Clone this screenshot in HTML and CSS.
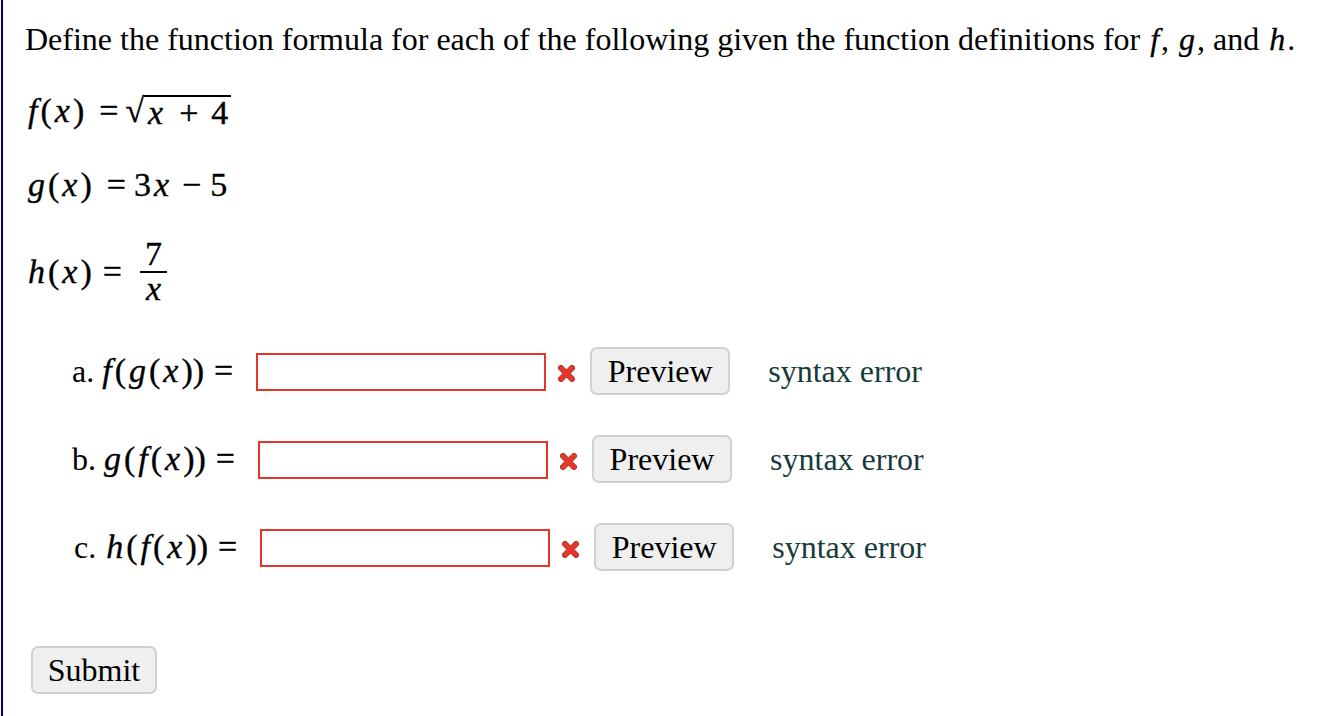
FILE: index.html
```html
<!DOCTYPE html>
<html>
<head>
<meta charset="utf-8">
<link rel="stylesheet" href="styles.css">
</head>
<body>
<div class="page">
  <p class="intro">Define the function formula for each of the following given the function definitions for <i class="v">f</i>, <i class="v">g</i>, and <i class="v">h</i>.</p>

  <div class="def def-f"><span class="m"><i>f</i>(<i>x</i>)</span><span class="m eq">=</span><span class="m sqrt"><span class="rad">√</span><span class="radicand"><i>x</i><span class="bin">+</span>4</span></span></div>

  <div class="def def-g"><span class="m"><i>g</i>(<i>x</i>)</span><span class="m eq">=</span><span class="m">3<i>x</i></span><span class="m op">−</span><span class="m">5</span></div>

  <div class="def def-h"><span class="m"><i>h</i>(<i>x</i>)</span><span class="m eq">=</span><span class="m frac"><span class="num">7</span><span class="den"><i>x</i></span></span></div>

  <div class="parts">
    <div class="row">
      <span class="lbl">a.</span><span class="m"><i>f</i>(<i>g</i>(<i>x</i>))</span><span class="m eq">=</span>
      <input class="ans" type="text">
      <svg class="xmark" width="17" height="17" viewBox="0 0 17 17"><path d="M3 3 L14 14 M14 3 L3 14" stroke="#8a3a33" stroke-width="6" stroke-linecap="round"/><path d="M3 3 L14 14 M14 3 L3 14" stroke="#e8352b" stroke-width="4.6" stroke-linecap="round"/></svg>
      <button class="btn">Preview</button>
      <span class="msg">syntax error</span>
    </div>
    <div class="row">
      <span class="lbl">b.</span><span class="m"><i>g</i>(<i>f</i>(<i>x</i>))</span><span class="m eq">=</span>
      <input class="ans" type="text">
      <svg class="xmark" width="17" height="17" viewBox="0 0 17 17"><path d="M3 3 L14 14 M14 3 L3 14" stroke="#8a3a33" stroke-width="6" stroke-linecap="round"/><path d="M3 3 L14 14 M14 3 L3 14" stroke="#e8352b" stroke-width="4.6" stroke-linecap="round"/></svg>
      <button class="btn">Preview</button>
      <span class="msg">syntax error</span>
    </div>
    <div class="row row-c">
      <span class="lbl">c.</span><span class="m"><i>h</i>(<i>f</i>(<i>x</i>))</span><span class="m eq">=</span>
      <input class="ans" type="text">
      <svg class="xmark" width="17" height="17" viewBox="0 0 17 17"><path d="M3 3 L14 14 M14 3 L3 14" stroke="#8a3a33" stroke-width="6" stroke-linecap="round"/><path d="M3 3 L14 14 M14 3 L3 14" stroke="#e8352b" stroke-width="4.6" stroke-linecap="round"/></svg>
      <button class="btn">Preview</button>
      <span class="msg">syntax error</span>
    </div>
  </div>

  <div class="submit-wrap"><button class="btn submit">Submit</button></div>
</div>
</body>
</html>
```

FILE: styles.css
```css
html, body {
  margin: 0;
  padding: 0;
  background: #ffffff;
}
body {
  font-family: "Liberation Serif", "Times New Roman", serif;
  color: #000;
}
.page {
  margin-left: 1px;
  border-left: 2px solid #000080;
  min-height: 716px;
  box-sizing: border-box;
  padding: 21px 0 0 22px;
}
.intro {
  font-size: 32px;
  line-height: 36px;
  margin: 0;
}
.intro .v {
  font-style: italic;
  padding: 0 2px;
  -webkit-text-stroke: 0.3px #000;
}
.def {
  display: flex;
  align-items: center;
  height: 40px;
}
.m {
  font-size: 34px;
  line-height: 40px;
  -webkit-text-stroke: 0.35px #000;
}
.m i {
  font-style: italic;
  padding: 0 3px;
}
.def-f { margin-top: 34px; }
.def-g { margin-top: 34px; }
.def-h { margin-top: 32px; height: 70px; }
.eq {
  margin: 0 8px 0 15px;
}
.def-h .eq {
  margin-left: 11px;
}
.op {
  margin: 0 9px 0 10px;
}
.bin {
  margin: 0 13px;
}
.sqrt {
  display: inline-flex;
  align-items: flex-end;
  height: 36px;
}
.rad {
  line-height: 36px;
  margin-left: -1px;
}
.radicand {
  border-top: 2px solid #000;
  line-height: 32px;
  padding: 0 3px 0 1px;
}
.frac {
  display: inline-flex;
  flex-direction: column;
  align-items: center;
  line-height: 32px;
  margin-left: 10px;
}
.frac .num {
  border-bottom: 2px solid #000;
  padding: 0 5px 2px 5px;
  line-height: 30px;
}
.frac .den {
  line-height: 32px;
}
.parts {
  margin-top: 40px;
  padding-left: 47px;
}
.row {
  display: flex;
  align-items: center;
  height: 48px;
  margin-bottom: 40px;
  font-size: 32px;
}
.row:last-child { margin-bottom: 0; }
.lbl {
  margin-right: 5px;
}
.row-c .lbl {
  margin-left: 2px;
  margin-right: 7px;
}
.row .eq {
  margin: 0 23px 0 10px;
}
.ans {
  width: 290px;
  height: 38px;
  box-sizing: border-box;
  border: 2px solid #e8352b;
  border-radius: 0;
  padding: 0;
  margin: 2px 0 0 0;
  background: #fff;
  outline: none;
}
.xmark {
  margin: 4px 15px 0 12px;
}
.btn {
  font-family: "Liberation Serif", "Times New Roman", serif;
  font-size: 32px;
  background: #efefef;
  border: 2px solid #d0d0d0;
  border-radius: 7px;
  color: #000;
  height: 48px;
  padding: 0;
  box-sizing: border-box;
}
.row .btn {
  width: 140px;
}
.msg {
  margin-left: 38px;
  color: #173a3a;
}
.submit-wrap {
  margin-top: 75px;
  padding-left: 6px;
}
.submit {
  width: 126px;
  height: 48px;
}
```
